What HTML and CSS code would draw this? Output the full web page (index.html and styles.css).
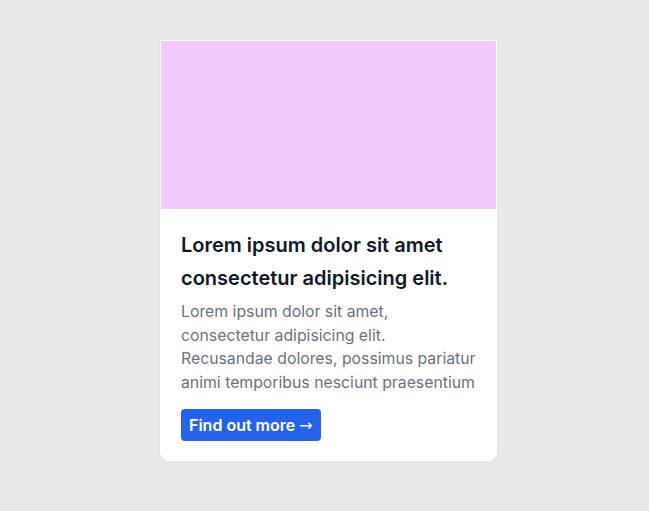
FILE: index.html
```html
<!DOCTYPE html>
<html>
<head>
<meta charset="utf-8">
<link rel="stylesheet" href="styles.css">
</head>
<body>
<div class="page">
  <div class="card">
    <div class="media"></div>
    <div class="content">
      <h2 class="title">Lorem ipsum dolor sit amet consectetur adipisicing elit.</h2>
      <p class="text">Lorem ipsum dolor sit amet, consectetur adipisicing elit. Recusandae dolores, possimus pariatur animi temporibus nesciunt praesentium</p>
      <a class="btn" href="#">Find out more <span class="arrow">→</span></a>
    </div>
  </div>
</div>
</body>
</html>
```
FILE: styles.css
```css
html, body {
  margin: 0;
  padding: 0;
  background: #e8e8e8;
  font-family: Inter, "Noto Sans", sans-serif;
}
.page {
  padding: 40px 0 0 160px;
}
.card {
  width: 335px;
  background: #fff;
  border: 1px solid #fff;
  border-radius: 2px 2px 8px 8px;
  box-shadow: 0 1px 2px rgba(0,0,0,0.06);
}
.media {
  height: 168px;
  background: #f0cdfe;
}
.content {
  padding: 20px 20px 19px;
}
.title {
  margin: 0;
  font-size: 20px;
  font-weight: 600;
  line-height: 33px;
  color: #111827;
}
.text {
  margin: 5px 0 0;
  font-size: 15.8px;
  line-height: 23.5px;
  color: #6b7280;
}
.btn {
  display: inline-block;
  margin-top: 15px;
  padding: 0 8px;
  height: 32px;
  line-height: 32px;
  background: #2563eb;
  color: #fff;
  font-size: 16px;
  font-weight: 600;
  text-decoration: none;
  border-radius: 4px;
}
.arrow {
  font-family: "DejaVu Sans", sans-serif;
  font-weight: 400;
}
```
